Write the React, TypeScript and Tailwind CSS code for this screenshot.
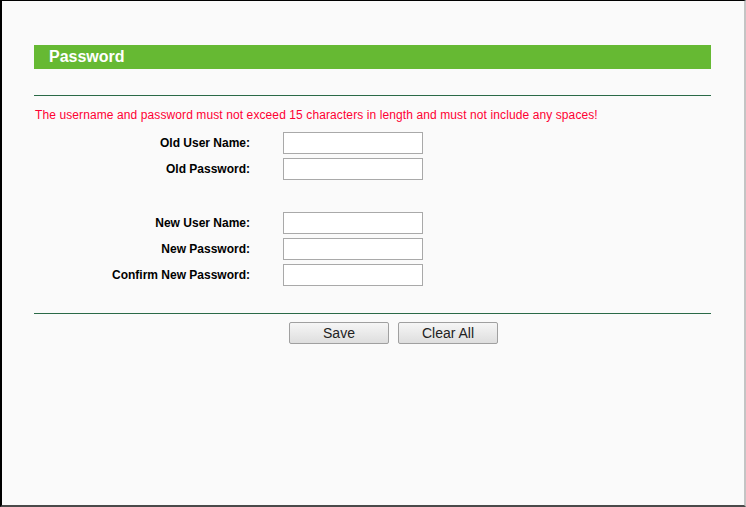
import React from "react";

const Row = ({ label, type = "text" }: { label: string; type?: string }) => (
  <div className="flex items-center h-[22px]">
    <div className="w-[216px] text-right font-bold text-[12px] text-black leading-[14px]">{label}</div>
    <input
      type={type}
      className="ml-[33px] w-[140px] h-[22px] bg-white border border-[#a9a9a9] outline-none"
    />
  </div>
);

export default function App() {
  return (
    <div
      className="w-[746px] h-[507px] box-border bg-[#fafafa] border-l-2 border-l-black border-t border-t-black border-r-2 border-r-[#c4c4c4] border-b-2 border-b-[#4a4a4a] pl-[32px]"
      style={{ fontFamily: '"Liberation Sans", Arial, sans-serif' }}
    >
      <div className="w-[677px]">
        <div className="mt-[44px] h-[24px] bg-[#66b933] pl-[15px] text-white font-bold text-[16px] leading-[24px]">
          Password
        </div>
        <div className="mt-[26px] border-t border-t-[#2a6a47] h-[1px] bg-[#d6e5db]" />
        <div className="mt-[11px] pl-[1px] text-[12px] leading-[16px] tracking-[0.1px] text-[#ff0033]">
          The username and password must not exceed 15 characters in length and must not include any spaces!
        </div>
        <div className="mt-[9px] flex flex-col gap-[4px]">
          <Row label="Old User Name:" />
          <Row label="Old Password:" type="password" />
        </div>
        <div className="mt-[32px] flex flex-col gap-[4px]">
          <Row label="New User Name:" />
          <Row label="New Password:" type="password" />
          <Row label="Confirm New Password:" type="password" />
        </div>
        <div className="mt-[27px] border-t border-t-[#2a6a47] h-[1px] bg-[#d6e5db]" />
        <div className="mt-[8px] flex gap-[9px] pl-[255px]">
          <button className="w-[100px] h-[22px] border border-[#a0a0a0] rounded-[2px] bg-gradient-to-b from-[#f6f6f6] to-[#dedede] text-[14px] text-[#222] leading-[20px]">
            Save
          </button>
          <button className="w-[100px] h-[22px] border border-[#a0a0a0] rounded-[2px] bg-gradient-to-b from-[#f6f6f6] to-[#dedede] text-[14px] text-[#222] leading-[20px]">
            Clear All
          </button>
        </div>
      </div>
    </div>
  );
}
